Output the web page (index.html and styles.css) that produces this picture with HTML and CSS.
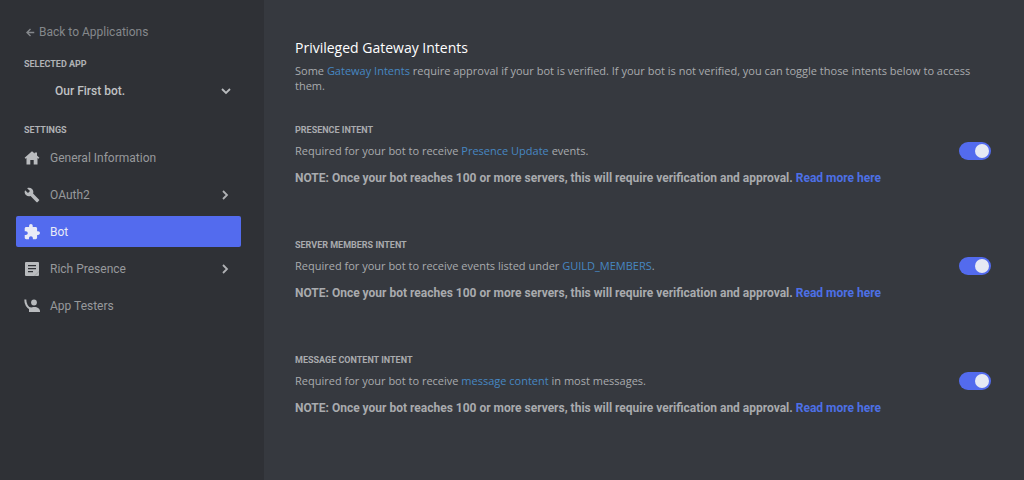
FILE: index.html
```html
<!DOCTYPE html>
<html lang="en">
<head>
<meta charset="utf-8">
<meta name="viewport" content="width=device-width, initial-scale=1">
<title>Bot settings</title>
<link rel="stylesheet" href="styles.css">
</head>
<body>
<div class="layout">
  <aside class="sidebar">
    <a class="back" href="#">
      <svg class="back-icon" viewBox="0 0 10 10"><path d="M9.200 5H1.400M5 1L1 5l4 4" fill="none" stroke="currentColor" stroke-width="1.500"/></svg>
      Back to Applications
    </a>
    <label class="side-title" for="app">Selected App</label>
    <div class="picker">
      <select id="app" class="picker-select"><option>Our First bot.</option></select>
      <svg class="picker-arrow" viewBox="0 0 10 10"><path d="M1 3l4 4 4-4" fill="none" stroke="currentColor" stroke-width="1.8"/></svg>
    </div>
    <h2 class="side-title">Settings</h2>
    <nav class="nav">
      <a class="nav-item" href="#">
        <svg class="nav-icon" viewBox="0 0 16 16"><path fill="currentColor" d="M8 1.200L.6 7.700l.9 1.100L2.500 8V14.500h3.800V10h3.400v4.500h3.800V8l1 .8.9-1.100-2.400-2.100V2.500h-2.300v1.100z"/></svg>
        <span>General Information</span>
      </a>
      <a class="nav-item" href="#">
        <svg class="nav-icon" viewBox="0 0 24 24"><path fill="currentColor" d="M22.700 19l-9.100-9.100c.9-2.300.4-5-1.500-6.900-2-2-5-2.400-7.400-1.300L9 6 6 9 1.600 4.700C.4 7.100.9 10.100 2.900 12.100c1.900 1.900 4.600 2.400 6.900 1.500l9.100 9.100c.4.4 1 .4 1.400 0l2.300-2.300c.5-.4.5-1.100.1-1.400z"/></svg>
        <span>OAuth2</span>
        <svg class="nav-arrow" viewBox="0 0 10 10"><path d="M3 1l4 4-4 4" fill="none" stroke="currentColor" stroke-width="1.8"/></svg>
      </a>
      <a class="nav-item nav-item-active" href="#" aria-current="page">
        <svg class="nav-icon" viewBox="1 1 22 22"><path fill="currentColor" d="M20.500 11H19V7c0-1.100-.9-2-2-2h-4V3.500a2.500 2.500 0 0 0-5 0V5H4c-1.100 0-2 .9-2 2v3.800h1.500c1.500 0 2.700 1.200 2.700 2.700S5 16.200 3.500 16.200H2V20c0 1.100.9 2 2 2h3.800v-1.500c0-1.500 1.200-2.700 2.700-2.700s2.700 1.200 2.700 2.700V22H17c1.100 0 2-.9 2-2v-4h1.500a2.500 2.500 0 0 0 0-5z"/></svg>
        <span>Bot</span>
      </a>
      <a class="nav-item" href="#">
        <svg class="nav-icon" viewBox="0 0 16 16"><path fill="currentColor" fill-rule="evenodd" d="M2 1h12a1 1 0 0 1 1 1v8.500L10.500 15H2a1 1 0 0 1-1-1V2a1 1 0 0 1 1-1zM4 4v1.200h8V4zm0 3v1.200h8V7zm0 3v1.200h5V10z"/><path fill="currentColor" d="M15 10.400V14a1 1 0 0 1-1 1h-3.600z"/></svg>
        <span>Rich Presence</span>
        <svg class="nav-arrow" viewBox="0 0 10 10"><path d="M3 1l4 4-4 4" fill="none" stroke="currentColor" stroke-width="1.8"/></svg>
      </a>
      <a class="nav-item" href="#">
        <svg class="nav-icon" viewBox="0 0 16 16"><circle cx="10" cy="4.500" r="2.900" fill="currentColor"/><path d="M1.300 1.500c0 4.500 1.900 7.700 5.400 9.500" fill="none" stroke="currentColor" stroke-width="2"/><path fill="currentColor" d="M5 9.500c2.500.2 3.500-.6 5.500-.6 3 0 5.500 1.700 5.500 4.100V14H5z"/></svg>
        <span>App Testers</span>
      </a>
    </nav>
  </aside>
  <main class="main">
    <h1 class="title">Privileged Gateway Intents</h1>
    <p class="intro">Some <a class="link" href="#">Gateway Intents</a> require approval if your bot is verified. If your bot is not verified, you can toggle those intents below to access them.</p>
    <section class="intent">
      <div class="intent-text">
        <label class="intent-title" for="presence">Presence Intent</label>
        <p class="text">Required for your bot to receive <a class="link" href="#">Presence Update</a> events.</p>
        <p class="note">NOTE: Once your bot reaches 100 or more servers, this will require verification and approval. <a class="note-link" href="#">Read more here</a></p>
      </div>
      <input class="toggle" type="checkbox" role="switch" id="presence" checked>
    </section>
    <section class="intent">
      <div class="intent-text">
        <label class="intent-title" for="members">Server Members Intent</label>
        <p class="text">Required for your bot to receive events listed under <a class="link" href="#">GUILD_MEMBERS</a>.</p>
        <p class="note">NOTE: Once your bot reaches 100 or more servers, this will require verification and approval. <a class="note-link" href="#">Read more here</a></p>
      </div>
      <input class="toggle" type="checkbox" role="switch" id="members" checked>
    </section>
    <section class="intent">
      <div class="intent-text">
        <label class="intent-title" for="content">Message Content Intent</label>
        <p class="text">Required for your bot to receive <a class="link" href="#">message content</a> in most messages.</p>
        <p class="note">NOTE: Once your bot reaches 100 or more servers, this will require verification and approval. <a class="note-link" href="#">Read more here</a></p>
      </div>
      <input class="toggle" type="checkbox" role="switch" id="content" checked>
    </section>
  </main>
</div>
</body>
</html>
```

FILE: styles.css
```css
* { box-sizing: border-box; }

body {
  margin: 0;
  background: #36393f;
  color: #a9abae;
  font: 12px/16px Roboto, "Open Sans", sans-serif;
}

h1, h2, p { margin: 0; }
a { text-decoration: none; }

.layout {
  display: grid;
  grid-template-columns: 264px 1fr;
  min-height: 100vh;
}

.sidebar {
  background: #2f3136;
  padding: 24px 23px 24px 16px;
}

.back {
  display: flex;
  align-items: center;
  gap: 4px;
  padding-left: 10px;
  color: #85888c;
}
.back-icon { width: 9px; height: 9px; }

.side-title {
  display: block;
  margin: 17px 0 0 8px;
  font-size: 9px;
  line-height: 14px;
  font-weight: 700;
  text-transform: uppercase;
  color: #b0b2b5;
}

.picker {
  display: flex;
  align-items: center;
  position: relative;
  margin: 5px 0 18px;
}
.picker-select {
  appearance: none;
  width: 100%;
  height: 29px;
  padding: 0 39px;
  border: 0;
  background: transparent;
  color: #c0c2c4;
  font: inherit;
  font-weight: 500;
}
.picker-arrow {
  position: absolute;
  right: 10px;
  width: 10px;
  height: 10px;
  color: #b9bbbe;
  pointer-events: none;
}

.nav {
  display: flex;
  flex-direction: column;
  gap: 6px;
  margin-top: 5px;
}
.nav-item {
  display: flex;
  align-items: center;
  gap: 10px;
  height: 31px;
  padding: 0 11px 0 8px;
  border-radius: 2px;
  color: #97999c;
}
.nav-icon { width: 16px; height: 16px; color: #b9bbbe; }
.nav-arrow { width: 10px; height: 10px; margin-left: auto; color: #b0b2b5; }
.nav-item-active { background: #536bee; color: #e9ebf6; }
.nav-item-active .nav-icon { color: #e9ebf6; }

.main { padding: 38px 33px 24px 31px; }

.title,
.intro,
.text {
  font-family: "Open Sans", sans-serif;
  font-size: 11px;
}
.title {
  font-size: 14px;
  line-height: 20px;
  font-weight: 500;
  color: #fff;
}
.intro {
  margin: 5px 0 30px;
  line-height: 15px;
}
.link { color: #4687c2; }

.intent {
  display: flex;
  align-items: flex-start;
  gap: 24px;
  margin-bottom: 52px;
}
.intent-text { flex: 1; }
.intent-title {
  display: block;
  margin-bottom: 6px;
  font-size: 9px;
  line-height: 14px;
  font-weight: 700;
  text-transform: uppercase;
}
.text { line-height: 16px; }
.note {
  margin-top: 11px;
  font-weight: 700;
  line-height: 16px;
}
.note-link { color: #4d70e6; }

.toggle {
  appearance: none;
  display: flex;
  align-items: center;
  justify-content: flex-start;
  width: 32px;
  height: 18px;
  margin: 19px 0 0;
  padding: 0 2px;
  border-radius: 9px;
  background: #72767d;
}
.toggle::before {
  content: "";
  width: 14px;
  height: 14px;
  border-radius: 50%;
  background: #e6e9f4;
}
.toggle:checked { justify-content: flex-end; background: #536bee; }
```
